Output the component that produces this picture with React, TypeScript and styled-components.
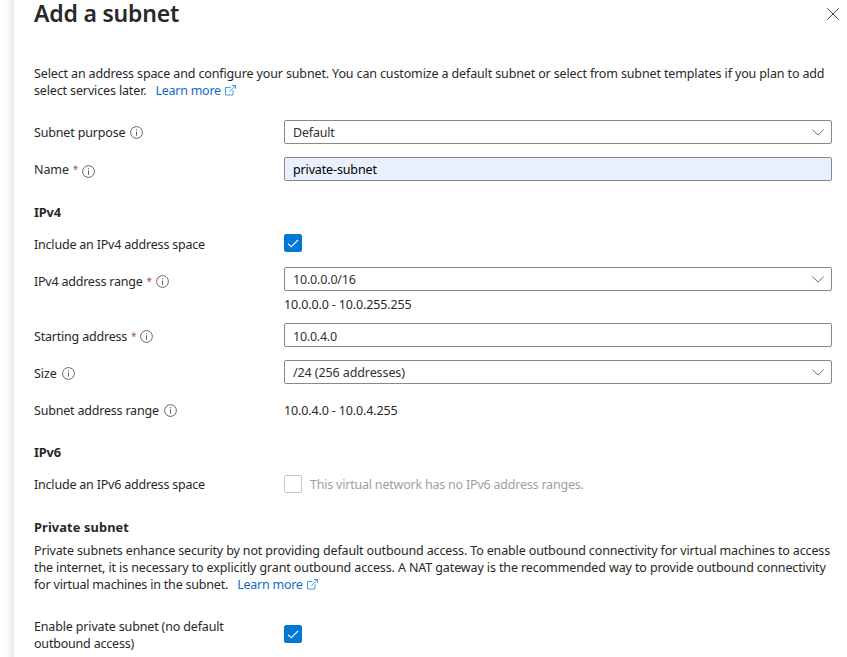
import React from 'react';
import styled, { createGlobalStyle } from 'styled-components';

const GlobalStyle = createGlobalStyle`
  * { box-sizing: border-box; }
  body {
    margin: 0;
    overflow: hidden;
    background: #fff;
    color: #292827;
    font: 12.5px/17px "Segoe UI", "Noto Sans", "Open Sans", sans-serif;
  }
  h1, h2, p { margin: 0; }
`;

const Page = styled.div`
  display: flex;
  height: 657px;
  overflow: hidden;
`;

const Backdrop = styled.div`
  flex: 0 0 14px;
  background: linear-gradient(to right, #fff 0, #fefefe 4px, #f8f8f8 9px, #f1f1f1 12px, #e4e4e4 14px);
`;

const Panel = styled.main`
  flex: 1;
  min-width: 0;
  display: flex;
  flex-direction: column;
  padding: 0 8px 0 20px;
`;

const Header = styled.header`
  display: flex;
  justify-content: space-between;
  height: 65px;
`;

const Title = styled.h1`
  font-size: 23px;
  line-height: 27px;
  font-weight: 600;
  white-space: nowrap;
`;

const CloseButton = styled.button`
  display: flex;
  width: 12px;
  height: 12px;
  margin-top: 8px;
  padding: 0;
  border: 0;
  background: none;
`;

const Text = styled.span<{ $track?: number }>`
  display: inline-block;
  white-space: nowrap;
  letter-spacing: ${(p) => p.$track ?? 0}px;
`;

const Paragraph = styled.p<{ $top?: number }>`
  display: flex;
  flex-direction: column;
  margin-top: ${(p) => p.$top ?? 0}px;
`;

const TextLine = styled.span`
  display: flex;
  height: 17px;
`;

const Link = styled.a`
  display: inline-flex;
  align-items: center;
  gap: 4px;
  margin-left: 9px;
  color: #0f6cc8;
`;

const SectionTitle = styled.h2<{ $top: number }>`
  margin-top: ${(p) => p.$top}px;
  height: 17px;
  font-size: 12.8px;
  line-height: 17px;
  font-weight: 700;
`;

const Row = styled.div<{ $top: number; $height?: number }>`
  display: grid;
  grid-template-columns: 250px 548px;
  align-items: center;
  height: ${(p) => p.$height ?? 24}px;
  margin-top: ${(p) => p.$top}px;
`;

const Label = styled.label<{ $drop?: number }>`
  display: flex;
  align-items: center;
  padding-top: ${(p) => p.$drop ?? 0}px;
`;

const Required = styled.span`
  width: 5px;
  margin-left: 4px;
  color: #a4565c;
  font-size: 10px;
`;

const InfoSlot = styled.span<{ $drop: number; $gap: number }>`
  display: flex;
  margin-left: ${(p) => p.$gap}px;
  padding-top: ${(p) => p.$drop}px;
`;

const Field = styled.div<{ $filled?: boolean; $drop?: number }>`
  display: flex;
  align-items: center;
  justify-content: space-between;
  height: 24px;
  padding: ${(p) => p.$drop ?? 0}px 7px 0 8px;
  border: 1px solid #8a8886;
  border-radius: 2px;
  background: ${(p) => (p.$filled ? '#e8f0fe' : '#fff')};
  color: ${(p) => (p.$filled ? '#000' : '#323130')};
`;

const CheckGroup = styled.div<{ $lift?: number }>`
  display: flex;
  align-items: center;
  gap: 8px;
  padding-bottom: ${(p) => p.$lift ?? 0}px;
  color: #a19f9d;
`;

const Box = styled.span<{ $checked?: boolean }>`
  display: flex;
  align-items: center;
  justify-content: center;
  width: 18px;
  height: 18px;
  border: 1px solid ${(p) => (p.$checked ? '#0078d4' : '#c8c6c4')};
  border-radius: 2px;
  background: ${(p) => (p.$checked ? '#0078d4' : '#fff')};
`;

const Note = styled.div<{ $top: number }>`
  height: 17px;
  margin: ${(p) => p.$top}px 0 0 250px;
`;

const InfoIcon = () => (
  <svg width="13" height="13" viewBox="0 0 13 13" fill="none">
    <circle cx="6.5" cy="6.5" r="5.9" stroke="#605e5c" strokeWidth="0.95" />
    <path d="M6.5 5.5v4.2" stroke="#605e5c" />
    <path d="M6.5 3.2v1.1" stroke="#605e5c" strokeWidth="1.1" />
  </svg>
);

const ChevronIcon = () => (
  <svg width="12" height="7" viewBox="0 0 12 7" fill="none">
    <path d="M.4.7 6 6.1 11.6.7" stroke="#706e6c" strokeWidth="1" />
  </svg>
);

const ExternalIcon = () => (
  <svg width="11" height="11" viewBox="0 0 11 11" fill="none" stroke="#2b88d8" strokeWidth="0.85">
    <path d="M5.5 2.5h-5v7.5h7.5V5M7 .5h3.5V4M10.5.5 4.2 6.8" />
  </svg>
);

const CloseIcon = () => (
  <svg width="12" height="12" viewBox="0 0 12 12" fill="none">
    <path d="M.3.3l11.4 11.4M11.7.3.3 11.7" stroke="#484644" strokeWidth="1" />
  </svg>
);

const CheckIcon = () => (
  <svg width="12" height="9" viewBox="0 0 12 9" fill="none">
    <path d="M1 4.6 4.2 7.8 11 1" stroke="#fff" strokeWidth="1.15" />
  </svg>
);

type LabelProps = {
  text: string;
  track?: number;
  required?: boolean;
  info?: boolean;
  drop?: number;
  infoDrop?: number;
};

const FieldLabel = ({ text, track, required, info, drop, infoDrop = 1 }: LabelProps) => (
  <Label $drop={drop}>
    <Text $track={track}>{text}</Text>
    {required && <Required>*</Required>}
    {info && <InfoSlot $drop={infoDrop} $gap={required ? 4 : 5}><InfoIcon /></InfoSlot>}
  </Label>
);

const LearnMore = () => (
  <Link>
    <Text $track={-0.25}>Learn more</Text>
    <ExternalIcon />
  </Link>
);

export default function App() {
  return (
    <>
      <GlobalStyle />
      <Page>
        <Backdrop />
        <Panel>
          <Header>
            <Title><Text $track={-0.2}>Add a subnet</Text></Title>
            <CloseButton aria-label="Close"><CloseIcon /></CloseButton>
          </Header>
          <Paragraph>
            <TextLine><Text $track={-0.135}>Select an address space and configure your subnet. You can customize a default subnet or select from subnet templates if you plan to add</Text></TextLine>
            <TextLine><Text $track={-0.14}>select services later.</Text><LearnMore /></TextLine>
          </Paragraph>

          <Row $top={21}>
            <FieldLabel text="Subnet purpose" track={-0.16} info />
            <Field><Text $track={-0.2}>Default</Text><ChevronIcon /></Field>
          </Row>
          <Row $top={13}>
            <FieldLabel text="Name" track={-0.1} required info infoDrop={4} />
            <Field $filled><Text $track={-0.14}>private-subnet</Text></Field>
          </Row>

          <SectionTitle $top={23}><Text $track={-0.2}>IPv4</Text></SectionTitle>
          <Row $top={13} $height={18}>
            <FieldLabel text="Include an IPv4 address space" track={-0.2} />
            <CheckGroup $lift={2}><Box $checked><CheckIcon /></Box></CheckGroup>
          </Row>
          <Row $top={15}>
            <FieldLabel text="IPv4 address range" track={-0.22} required info drop={4} />
            <Field><Text $track={-0.18}>10.0.0.0/16</Text><ChevronIcon /></Field>
          </Row>
          <Note $top={5}><Text $track={-0.14}>10.0.0.0 - 10.0.255.255</Text></Note>
          <Row $top={10}>
            <FieldLabel text="Starting address" track={-0.2} required info drop={2} />
            <Field $drop={2}><Text $track={-0.25}>10.0.4.0</Text></Field>
          </Row>
          <Row $top={13}>
            <FieldLabel text="Size" track={-0.1} info drop={2} />
            <Field><Text $track={-0.1}>/24 (256 addresses)</Text><ChevronIcon /></Field>
          </Row>
          <Row $top={14}>
            <FieldLabel text="Subnet address range" track={-0.2} info />
            <Text $track={-0.14}>10.0.4.0 - 10.0.4.255</Text>
          </Row>

          <SectionTitle $top={22}><Text $track={-0.2}>IPv6</Text></SectionTitle>
          <Row $top={14} $height={18}>
            <FieldLabel text="Include an IPv6 address space" track={-0.2} />
            <CheckGroup><Box /><Text $track={-0.21}>This virtual network has no IPv6 address ranges.</Text></CheckGroup>
          </Row>

          <SectionTitle $top={26}><Text $track={0.12}>Private subnet</Text></SectionTitle>
          <Paragraph $top={6}>
            <TextLine><Text $track={-0.142}>Private subnets enhance security by not providing default outbound access. To enable outbound connectivity for virtual machines to access</Text></TextLine>
            <TextLine><Text $track={-0.117}>the internet, it is necessary to explicitly grant outbound access. A NAT gateway is the recommended way to provide outbound connectivity</Text></TextLine>
            <TextLine><Text $track={-0.2}>for virtual machines in the subnet.</Text><LearnMore /></TextLine>
          </Paragraph>
          <Row $top={25} $height={34}>
            <Paragraph>
              <TextLine><Text $track={-0.16}>Enable private subnet (no default</Text></TextLine>
              <TextLine><Text $track={-0.2}>outbound access)</Text></TextLine>
            </Paragraph>
            <CheckGroup $lift={2}><Box $checked><CheckIcon /></Box></CheckGroup>
          </Row>
        </Panel>
      </Page>
    </>
  );
}
